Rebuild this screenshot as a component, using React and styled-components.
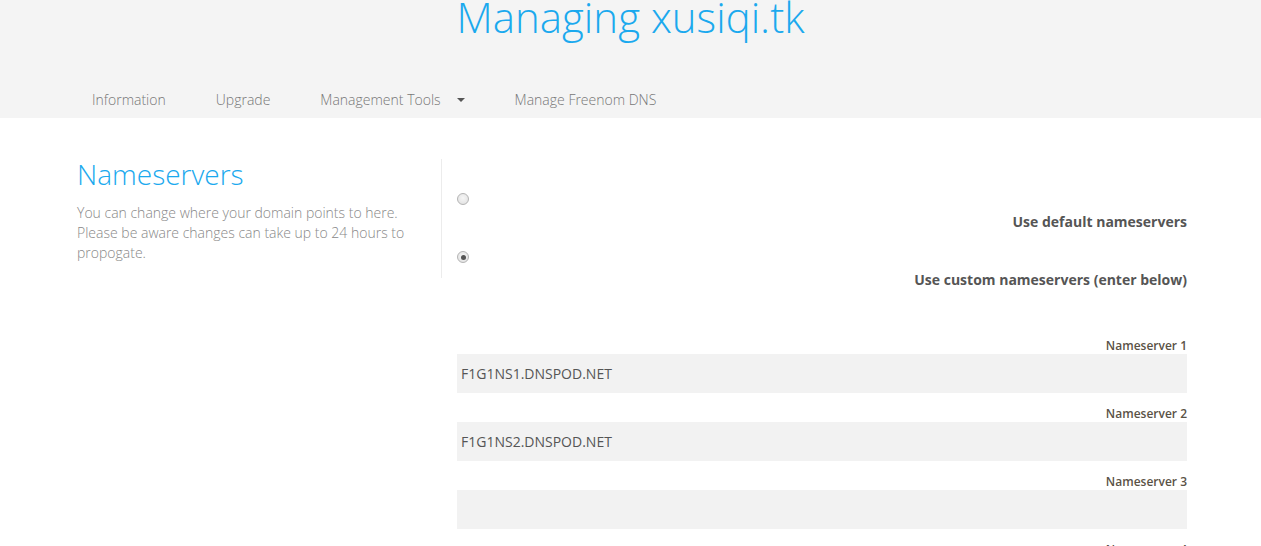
import React from 'react';
import styled, { createGlobalStyle } from 'styled-components';

const GlobalStyle = createGlobalStyle`
  html, body {
    margin: 0;
    padding: 0;
    overflow: hidden;
    background: #ffffff;
    font-family: 'Open Sans', 'Liberation Sans', sans-serif;
  }
`;

const Header = styled.header`
  background: #f4f4f4;
  height: 118px;
  display: flex;
  flex-direction: column;
`;

const Title = styled.h1`
  margin: -6px 0 0;
  text-align: center;
  font-size: 42px;
  line-height: 46px;
  font-weight: 300;
  color: #1ba9ee;
`;

const Nav = styled.nav`
  margin-top: auto;
  display: flex;
  align-items: center;
  height: 36px;
  padding-left: 67px;
`;

const NavItem = styled.a`
  display: flex;
  align-items: center;
  padding: 0 25px;
  font-size: 14px;
  line-height: 36px;
  font-weight: 300;
  color: #777;
  text-decoration: none;
`;

const Caret = styled.span`
  margin-left: 16px;
  width: 0;
  height: 0;
  border-left: 4px solid transparent;
  border-right: 4px solid transparent;
  border-top: 4px solid #555;
`;

const Main = styled.main`
  display: grid;
  grid-template-columns: 365px 730px;
  column-gap: 15px;
  align-items: start;
  padding-left: 77px;
`;

const Intro = styled.section`
  border-right: 1px solid #ececec;
  padding: 0 30px 15px 0;
  margin-top: 41px;
`;

const Heading = styled.h2`
  margin: 0 0 13px;
  font-size: 28px;
  line-height: 1.1;
  font-weight: 300;
  color: #1ba9ee;
`;

const Lead = styled.p`
  margin: 0;
  font-size: 14px;
  line-height: 20px;
  font-weight: 300;
  color: #888;
`;

const Form = styled.form`
  display: flex;
  flex-direction: column;
  padding-top: 71px;
`;

const Option = styled.label`
  display: flex;
  flex-direction: column;
  margin-bottom: 15px;
  cursor: pointer;
`;

const RadioRow = styled.div`
  height: 20px;
  display: flex;
  align-items: center;
`;

const Radio = styled.input.attrs({ type: 'radio' })`
  appearance: none;
  margin: 0;
  width: 12px;
  height: 12px;
  border-radius: 50%;
  border: 1px solid #b4b4b4;
  background: radial-gradient(circle at 50% 40%, #f6f6f6 0%, #dedede 100%);
  box-sizing: border-box;
  position: relative;

  &:checked::after {
    content: '';
    position: absolute;
    left: 2.5px;
    top: 2.5px;
    width: 5px;
    height: 5px;
    border-radius: 50%;
    background: #555;
  }
`;

const OptionText = styled.span`
  margin-top: 3px;
  text-align: right;
  font-size: 14px;
  line-height: 20px;
  font-weight: 700;
  color: #555;
`;

const Fields = styled.div`
  display: flex;
  flex-direction: column;
  gap: 12px;
  margin-top: 32px;
`;

const Field = styled.div`
  display: flex;
  flex-direction: column;
`;

const FieldLabel = styled.label`
  text-align: right;
  font-size: 12px;
  line-height: 17px;
  font-weight: 600;
  color: #5a5246;
`;

const TextInput = styled.input`
  box-sizing: border-box;
  height: 39px;
  width: 100%;
  border: none;
  outline: none;
  background: #f2f2f2;
  padding: 0 4px;
  font-family: 'Open Sans', 'Liberation Sans', sans-serif;
  font-size: 14px;
  color: #555;
`;

const servers = ['F1G1NS1.DNSPOD.NET', 'F1G1NS2.DNSPOD.NET', '', ''];

export default function App() {
  return (
    <>
      <GlobalStyle />
      <Header>
        <Title>Managing xusiqi.tk</Title>
        <Nav>
          <NavItem>Information</NavItem>
          <NavItem>Upgrade</NavItem>
          <NavItem>
            Management Tools
            <Caret />
          </NavItem>
          <NavItem>Manage Freenom DNS</NavItem>
        </Nav>
      </Header>
      <Main>
        <Intro>
          <Heading>Nameservers</Heading>
          <Lead>
            You can change where your domain points to here. Please be aware changes can take up to 24
            hours to propogate.
          </Lead>
        </Intro>
        <Form>
          <Option>
            <RadioRow>
              <Radio name="ns" />
            </RadioRow>
            <OptionText>Use default nameservers</OptionText>
          </Option>
          <Option>
            <RadioRow>
              <Radio name="ns" defaultChecked />
            </RadioRow>
            <OptionText>Use custom nameservers (enter below)</OptionText>
          </Option>
          <Fields>
            {servers.map((value, i) => (
              <Field key={i}>
                <FieldLabel>Nameserver {i + 1}</FieldLabel>
                <TextInput defaultValue={value} />
              </Field>
            ))}
          </Fields>
        </Form>
      </Main>
    </>
  );
}
